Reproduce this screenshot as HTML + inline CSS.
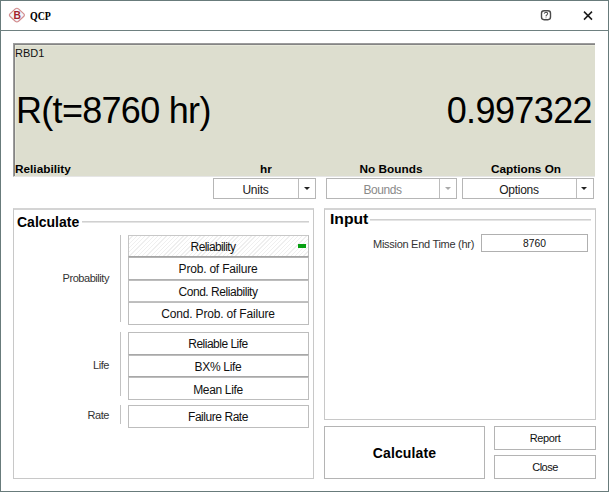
<!DOCTYPE html>
<html><head><meta charset="utf-8">
<style>
html,body{margin:0;padding:0;}
body{width:609px;height:492px;position:relative;overflow:hidden;background:#fff;font-family:"Liberation Sans",sans-serif;color:#000;}
.a{position:absolute;}
.t{position:absolute;white-space:nowrap;line-height:1;}
.win{left:0;top:0;width:607px;height:490px;border:1px solid #687b7b;}
.tline{left:0;top:30px;width:609px;height:1px;background:#6e8080;}
.disp{left:13px;top:43px;width:581px;height:132px;border-bottom:1px solid #e6e6e6;border-top:1px solid #9c9c9c;border-left:1px solid #9c9c9c;background:#dddecf;box-shadow:inset 1px 1px 0 #858585, inset 2px 2px 0 #e7e8da;}
.dd{box-sizing:border-box;border:1px solid #b6b6b6;background:#fff;height:21px;top:178px;}
.dd .dv{position:absolute;top:0;bottom:0;width:1px;background:#bcbcbc;}
.dd .ar{position:absolute;top:8px;width:0;height:0;border-left:3px solid transparent;border-right:3px solid transparent;border-top:3px solid #222;}
.grp{box-sizing:border-box;border:1px solid #c8c8c8;border-top:2px solid #d4d4d4;}
.btn{box-sizing:border-box;border:1px solid #bdbdbd;background:#fff;left:128px;width:181px;}
.lbl{color:#333;font-size:11px;letter-spacing:-0.45px;}
.bt{font-size:12px;color:#111;}
</style></head>
<body>
<div class="a win"></div>
<div class="a tline"></div>
<!-- title icon -->
<svg class="a" style="left:0;top:0" width="30" height="30" viewBox="0 0 30 30">
<path d="M15.3 8.9 Q16.9 7.6 18.5 8.9 L23.9 13.9 Q25 15.1 23.9 16.3 L18.5 21.2 Q16.9 22.5 15.3 21.2 L9.9 16.3 Q8.8 15.1 9.9 13.9 Z" fill="#f3f6f9" stroke="#d38c8e" stroke-width="1.2"/>
<text x="17.2" y="19" text-anchor="middle" font-family="Liberation Sans" font-weight="bold" font-size="10.3" fill="#a31f2c">B</text>
</svg>
<div class="t" style="left:30px;top:11px;font-size:11.8px;font-weight:bold;font-family:'Liberation Serif',serif;transform:scaleX(0.84);transform-origin:0 0;">QCP</div>
<!-- help -->
<svg class="a" style="left:536px;top:6px" width="20" height="18" viewBox="0 0 20 18">
<rect x="5.5" y="4.7" width="9" height="9" rx="2.6" fill="none" stroke="#4a4a4a" stroke-width="1.4"/>
<path d="M8.2 7.6 Q8.6 6.3 10.1 6.3 Q11.7 6.4 11.6 7.8 Q11.5 8.7 10.3 9.4 L9.9 10.4" fill="none" stroke="#555" stroke-width="1.1"/>
<rect x="9.5" y="11.3" width="1" height="1" fill="#888"/>
</svg>
<!-- close -->
<svg class="a" style="left:583px;top:11px" width="10" height="10" viewBox="0 0 10 10">
<path d="M1 0.6 L9 8.6 M9 0.6 L1 8.6" stroke="#1a1a1a" stroke-width="1.5"/>
</svg>

<!-- display panel -->
<div class="a disp"></div>
<div class="t" style="left:15px;top:48px;font-size:11px;color:#111;">RBD1</div>
<div class="t" style="left:16px;top:93px;font-size:36px;letter-spacing:-0.7px;color:#000;">R(t=8760 hr)</div>
<div class="t" style="right:17px;top:93px;font-size:36px;letter-spacing:-0.6px;color:#000;">0.997322</div>
<div class="t" style="left:15px;top:164px;font-size:11.8px;font-weight:bold;">Reliability</div>
<div class="t" style="left:226px;width:80px;text-align:center;top:164px;font-size:11.8px;font-weight:bold;">hr</div>
<div class="t" style="left:341px;width:100px;text-align:center;top:164px;font-size:11.8px;font-weight:bold;">No Bounds</div>
<div class="t" style="left:476px;width:100px;text-align:center;top:164px;font-size:11.8px;font-weight:bold;">Captions On</div>

<!-- dropdowns -->
<div class="a dd" style="left:213px;width:103px;">
  <div class="dv" style="left:84px"></div><div class="ar" style="left:90px"></div>
  <div class="t" style="left:-1px;width:85px;text-align:center;top:5px;font-size:12px;letter-spacing:-0.25px;color:#1a1a1a;">Units</div>
</div>
<div class="a dd" style="left:326px;width:131px;">
  <div class="dv" style="left:112px"></div><div class="ar" style="left:118px;border-top-color:#aaa"></div>
  <div class="t" style="left:-1px;width:113px;text-align:center;top:5px;font-size:12px;letter-spacing:-0.45px;color:#8a8a8a;">Bounds</div>
</div>
<div class="a dd" style="left:462px;width:132px;">
  <div class="dv" style="left:113px"></div><div class="ar" style="left:118px"></div>
  <div class="t" style="left:-1px;width:114px;text-align:center;top:5px;font-size:12px;letter-spacing:-0.27px;color:#1a1a1a;">Options</div>
</div>

<!-- Calculate group -->
<div class="a grp" style="left:13px;top:208px;width:301px;height:271px;"></div>
<div class="t" style="left:17px;top:215px;font-size:14px;font-weight:bold;">Calculate</div>
<div class="a" style="left:82px;top:221px;width:227px;height:1px;background:#d0d0d0;box-shadow:0 1px 0 #e4e4e4;"></div>

<div class="a" style="left:120px;top:235px;width:1px;height:87px;background:#c2c2c2;"></div>
<div class="t lbl" style="right:500px;top:273px;">Probability</div>
<div class="a btn" style="top:235px;height:22px;background:repeating-linear-gradient(135deg,#fff 0,#fff 2px,#efefef 2px,#efefef 3px);border-color:#c8c8c8 #bdbdbd #a4a4a4 #c4c4c4;"></div>
<div class="a" style="left:298px;top:244px;width:8px;height:4px;background:#07a012;"></div>
<div class="t bt" style="left:128px;width:170px;text-align:center;top:241px;letter-spacing:-0.6px;">Reliability</div>
<div class="a btn" style="top:257px;height:23px;border-top-color:#b4b4b4;border-bottom-color:#b0b0b0;"></div>
<div class="t bt" style="left:128px;width:180px;text-align:center;top:263px;letter-spacing:-0.2px;">Prob. of Failure</div>
<div class="a btn" style="top:280px;height:22px;border-bottom-color:#c0c0c0;"></div>
<div class="t bt" style="left:128px;width:180px;text-align:center;top:286px;letter-spacing:-0.45px;">Cond. Reliability</div>
<div class="a btn" style="top:302px;height:23px;"></div>
<div class="t bt" style="left:128px;width:180px;text-align:center;top:308px;letter-spacing:-0.18px;">Cond. Prob. of Failure</div>

<div class="a" style="left:120px;top:332px;width:1px;height:64px;background:#c2c2c2;"></div>
<div class="t lbl" style="right:500px;top:360px;">Life</div>
<div class="a btn" style="top:332px;height:23px;border-bottom-color:#a8a8a8;"></div>
<div class="t bt" style="left:128px;width:180px;text-align:center;top:338px;letter-spacing:-0.5px;">Reliable Life</div>
<div class="a btn" style="top:355px;height:22px;border-bottom-color:#a8a8a8;"></div>
<div class="t bt" style="left:128px;width:180px;text-align:center;top:361px;letter-spacing:-0.3px;">BX% Life</div>
<div class="a btn" style="top:377px;height:23px;"></div>
<div class="t bt" style="left:128px;width:180px;text-align:center;top:384px;letter-spacing:-0.33px;">Mean Life</div>

<div class="a" style="left:120px;top:405px;width:1px;height:19px;background:#c2c2c2;"></div>
<div class="t lbl" style="right:500px;top:410px;">Rate</div>
<div class="a btn" style="top:405px;height:23px;"></div>
<div class="t bt" style="left:128px;width:180px;text-align:center;top:411px;letter-spacing:-0.45px;">Failure Rate</div>

<!-- Input group -->
<div class="a grp" style="left:324px;top:208px;width:272px;height:212px;"></div>
<div class="t" style="left:330px;top:212px;font-size:14px;font-weight:bold;transform:scaleX(1.12);transform-origin:0 0;">Input</div>
<div class="a" style="left:370px;top:219px;width:221px;height:1px;background:#d0d0d0;box-shadow:0 1px 0 #e4e4e4;"></div>
<div class="t lbl" style="left:373px;top:239px;letter-spacing:-0.28px;">Mission End Time (hr)</div>
<div class="a" style="left:481px;top:234px;width:105px;height:16px;border:1px solid #b0b0b0;background:#fff;"></div>
<div class="t" style="left:481px;width:107px;text-align:center;top:239px;font-size:10.3px;color:#111;">8760</div>

<!-- bottom buttons -->
<div class="a" style="left:324px;top:426px;width:159px;height:51px;border:1px solid #b4b4b4;"></div>
<div class="t" style="left:324px;width:161px;text-align:center;top:446px;font-size:14px;font-weight:bold;letter-spacing:0.15px;">Calculate</div>
<div class="a" style="left:494px;top:426px;width:100px;height:22px;border:1px solid #b4b4b4;"></div>
<div class="t" style="left:494px;width:102px;text-align:center;top:433px;font-size:11px;letter-spacing:-0.4px;color:#111;">Report</div>
<div class="a" style="left:494px;top:455px;width:100px;height:22px;border:1px solid #b4b4b4;"></div>
<div class="t" style="left:494px;width:102px;text-align:center;top:462px;font-size:11px;letter-spacing:-0.5px;color:#111;">Close</div>
</body></html>
